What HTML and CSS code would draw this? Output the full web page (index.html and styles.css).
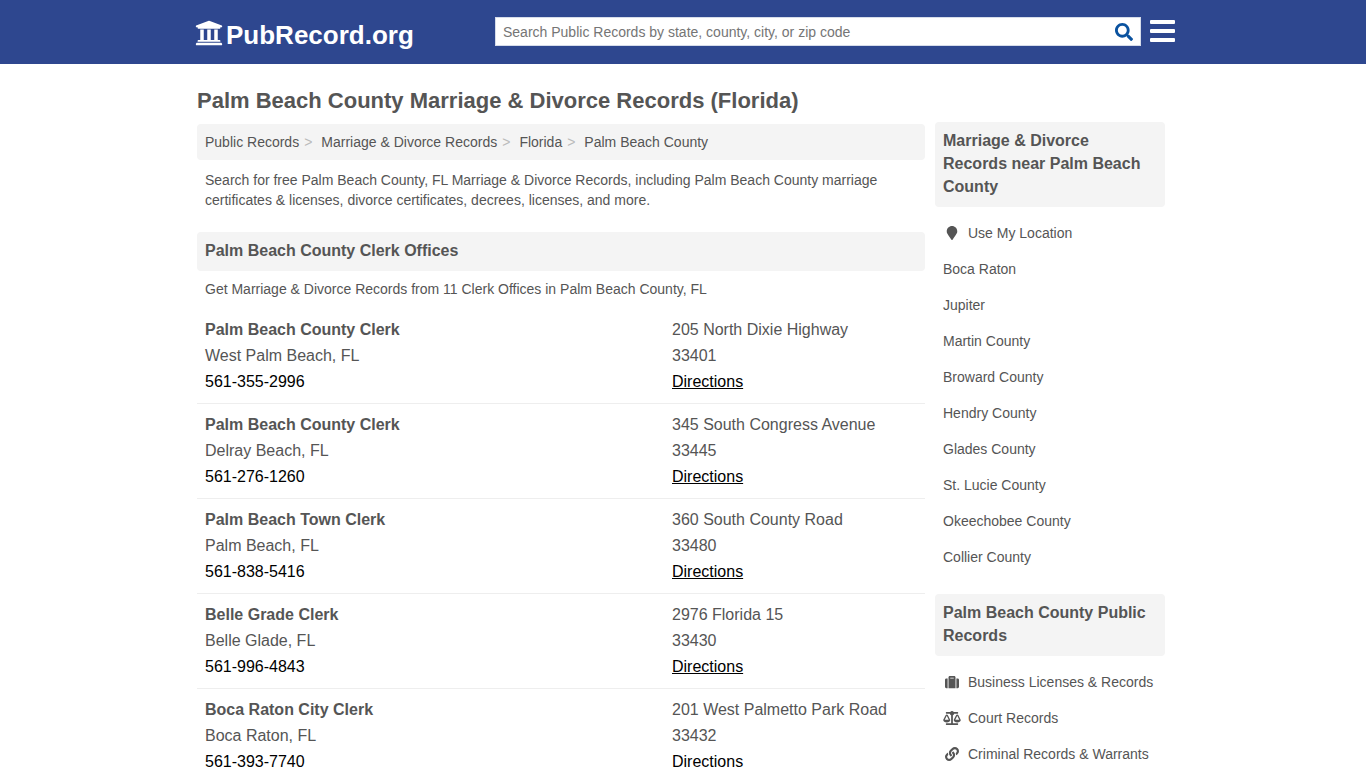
FILE: index.html
```html
<!DOCTYPE html>
<html lang="en">
<head>
<meta charset="utf-8">
<meta name="viewport" content="width=device-width, initial-scale=1">
<title>Palm Beach County Marriage &amp; Divorce Records (Florida)</title>
<link rel="stylesheet" href="styles.css">
</head>
<body>
<header class="site-header">
  <div class="header-inner">
    <a class="logo" href="#">
      <svg class="logo-icon" viewBox="0 0 512 512" aria-hidden="true"><path d="M496 128v16a8 8 0 0 1-8 8h-24v12c0 6.627-5.373 12-12 12H60c-6.627 0-12-5.373-12-12v-12H24a8 8 0 0 1-8-8v-16a8 8 0 0 1 4.941-7.392l232-88a7.996 7.996 0 0 1 6.118 0l232 88A8 8 0 0 1 496 128zm-24 304H40c-13.255 0-24 10.745-24 24v16a8 8 0 0 0 8 8h464a8 8 0 0 0 8-8v-16c0-13.255-10.745-24-24-24zM96 192v192H60c-6.627 0-12 5.373-12 12v20h416v-20c0-6.627-5.373-12-12-12h-36V192h-64v192h-64V192h-64v192h-64V192H96z"/></svg>
      <span>PubRecord.org</span>
    </a>
    <form class="search" role="search">
      <input class="search-input" type="text" aria-label="Search public records" placeholder="Search Public Records by state, county, city, or zip code">
      <button class="search-button" type="submit" aria-label="Search">
        <svg class="search-icon" viewBox="0 0 512 512" aria-hidden="true"><path d="M505 442.7L405.3 343c-4.5-4.5-10.6-7-17-7H372c27.6-35.3 44-79.7 44-128C416 93.1 322.9 0 208 0S0 93.1 0 208s93.1 208 208 208c48.3 0 92.7-16.4 128-44v16.3c0 6.4 2.5 12.5 7 17l99.7 99.7c9.4 9.4 24.6 9.4 33.9 0l28.3-28.3c9.4-9.4 9.4-24.6.1-34zM208 336c-70.7 0-128-57.2-128-128 0-70.7 57.2-128 128-128 70.7 0 128 57.2 128 128 0 70.7-57.2 128-128 128z"/></svg>
      </button>
    </form>
    <button class="menu-button" type="button" aria-label="Menu">
      <span class="menu-bar"></span><span class="menu-bar"></span><span class="menu-bar"></span>
    </button>
  </div>
</header>

<div class="page">
  <main class="content">
    <h1 class="page-title">Palm Beach County Marriage &amp; Divorce Records (Florida)</h1>
    <nav aria-label="Breadcrumb">
      <ol class="breadcrumb">
        <li><a href="#">Public Records</a></li>
        <li><a href="#">Marriage &amp; Divorce Records</a></li>
        <li><a href="#">Florida</a></li>
        <li><a href="#">Palm Beach County</a></li>
      </ol>
    </nav>
    <p class="intro">Search for free Palm Beach County, FL Marriage &amp; Divorce Records, including Palm Beach County marriage certificates &amp; licenses, divorce certificates, decrees, licenses, and more.</p>
    <h2 class="heading">Palm Beach County Clerk Offices</h2>
    <p class="summary">Get Marriage &amp; Divorce Records from 11 Clerk Offices in Palm Beach County, FL</p>

    <article class="office">
      <div><h3 class="office-name">Palm Beach County Clerk</h3><p>West Palm Beach, FL</p><a class="phone" href="tel:5613552996">561-355-2996</a></div>
      <div><p>205 North Dixie Highway</p><p>33401</p><a class="directions" href="#">Directions</a></div>
    </article>
    <article class="office">
      <div><h3 class="office-name">Palm Beach County Clerk</h3><p>Delray Beach, FL</p><a class="phone" href="tel:5612761260">561-276-1260</a></div>
      <div><p>345 South Congress Avenue</p><p>33445</p><a class="directions" href="#">Directions</a></div>
    </article>
    <article class="office">
      <div><h3 class="office-name">Palm Beach Town Clerk</h3><p>Palm Beach, FL</p><a class="phone" href="tel:5618385416">561-838-5416</a></div>
      <div><p>360 South County Road</p><p>33480</p><a class="directions" href="#">Directions</a></div>
    </article>
    <article class="office">
      <div><h3 class="office-name">Belle Grade Clerk</h3><p>Belle Glade, FL</p><a class="phone" href="tel:5619964843">561-996-4843</a></div>
      <div><p>2976 Florida 15</p><p>33430</p><a class="directions" href="#">Directions</a></div>
    </article>
    <article class="office">
      <div><h3 class="office-name">Boca Raton City Clerk</h3><p>Boca Raton, FL</p><a class="phone" href="tel:5613937740">561-393-7740</a></div>
      <div><p>201 West Palmetto Park Road</p><p>33432</p><a class="directions" href="#">Directions</a></div>
    </article>
  </main>

  <aside class="sidebar">
    <section>
      <h2 class="heading">Marriage &amp; Divorce Records near Palm Beach County</h2>
      <ul class="links">
        <li><a href="#"><svg class="link-icon" viewBox="-64 0 512 512" aria-hidden="true"><path d="M172.268 501.67C26.97 291.031 0 269.413 0 192 0 85.961 85.961 0 192 0s192 85.961 192 192c0 77.413-26.97 99.031-172.268 309.67-9.535 13.774-29.93 13.773-39.464 0z"/></svg>Use My Location</a></li>
        <li><a href="#">Boca Raton</a></li>
        <li><a href="#">Jupiter</a></li>
        <li><a href="#">Martin County</a></li>
        <li><a href="#">Broward County</a></li>
        <li><a href="#">Hendry County</a></li>
        <li><a href="#">Glades County</a></li>
        <li><a href="#">St. Lucie County</a></li>
        <li><a href="#">Okeechobee County</a></li>
        <li><a href="#">Collier County</a></li>
      </ul>
    </section>
    <section>
      <h2 class="heading">Palm Beach County Public Records</h2>
      <ul class="links">
        <li><a href="#"><svg class="link-icon" viewBox="0 0 512 512" aria-hidden="true"><path d="M128 480h256V80c0-26.5-21.5-48-48-48H176c-26.5 0-48 21.5-48 48v400zm64-384h128v32H192V96zm320 80v256c0 26.5-21.5 48-48 48h-48V128h48c26.5 0 48 21.5 48 48zM96 480H48c-26.5 0-48-21.5-48-48V176c0-26.5 21.5-48 48-48h48v352z"/></svg>Business Licenses &amp; Records</a></li>
        <li><a href="#"><svg class="link-icon" viewBox="0 0 640 512" aria-hidden="true"><path d="M256 336h-.02c0-16.18 1.34-8.73-85.05-181.51-17.65-35.29-68.19-35.36-85.87 0C-2.06 328.75.02 320.33.02 336H0c0 44.18 57.31 80 128 80s128-35.82 128-80zM128 176l72 144H56l72-144zm511.98 160c0-16.18 1.34-8.73-85.05-181.51-17.65-35.29-68.19-35.36-85.87 0-87.12 174.26-85.04 165.84-85.04 181.51H384c0 44.18 57.31 80 128 80s128-35.82 128-80h-.02zM440 320l72-144 72 144H440zm88 128H352V153.25c23.51-10.29 41.16-31.48 46.39-57.25H528c8.84 0 16-7.16 16-16V48c0-8.84-7.16-16-16-16H383.64C369.04 12.68 346.09 0 320 0s-49.04 12.68-63.64 32H112c-8.84 0-16 7.16-16 16v32c0 8.84 7.16 16 16 16h129.61c5.23 25.76 22.87 46.96 46.39 57.25V448H112c-8.84 0-16 7.16-16 16v32c0 8.84 7.16 16 16 16h416c8.84 0 16-7.16 16-16v-32c0-8.84-7.16-16-16-16z"/></svg>Court Records</a></li>
        <li><a href="#"><svg class="link-icon" viewBox="0 0 512 512" aria-hidden="true"><path d="M326.612 185.391c59.747 59.809 58.927 155.698.36 214.59-.11.12-.24.25-.36.37l-67.2 67.2c-59.27 59.27-155.699 59.262-214.96 0-59.27-59.26-59.27-155.7 0-214.96l37.106-37.106c9.84-9.84 26.786-3.3 27.294 10.606.648 17.722 3.826 35.527 9.69 52.721 1.986 5.822.567 12.262-3.783 16.612l-13.087 13.087c-28.026 28.026-28.905 73.66-1.155 101.96 28.024 28.579 74.086 28.749 102.325.51l67.2-67.19c28.191-28.191 28.073-73.757 0-101.83-3.701-3.694-7.429-6.564-10.341-8.569a16.037 16.037 0 0 1-6.947-12.606c-.396-10.567 3.348-21.456 11.698-29.806l21.054-21.055c5.521-5.521 14.182-6.199 20.584-1.731a152.482 152.482 0 0 1 20.522 17.197zM467.547 44.449c-59.261-59.262-155.69-59.27-214.96 0l-67.2 67.2c-.12.12-.25.25-.36.37-58.566 58.892-59.387 154.781.36 214.59a152.454 152.454 0 0 0 20.521 17.196c6.402 4.468 15.064 3.789 20.584-1.731l21.054-21.055c8.35-8.35 12.094-19.239 11.698-29.806a16.037 16.037 0 0 0-6.947-12.606c-2.912-2.005-6.64-4.875-10.341-8.569-28.073-28.073-28.191-73.639 0-101.83l67.2-67.19c28.239-28.239 74.3-28.069 102.325.51 27.75 28.3 26.872 73.934-1.155 101.96l-13.087 13.087c-4.35 4.35-5.769 10.79-3.783 16.612 5.864 17.194 9.042 34.999 9.69 52.721.509 13.906 17.454 20.446 27.294 10.606l37.106-37.106c59.271-59.259 59.271-155.699.001-214.959z"/></svg>Criminal Records &amp; Warrants</a></li>
      </ul>
    </section>
  </aside>
</div>
</body>
</html>
```
FILE: styles.css
```css
* { box-sizing: border-box; }

body {
  margin: 0;
  background: #fff;
  color: #555;
  font: 14px/20px "Liberation Sans", Arial, sans-serif;
}

h1, h2, h3, p, ol, ul { margin: 0; padding: 0; }
ol, ul { list-style: none; }
a { color: inherit; text-decoration: none; }
button { border: 0; padding: 0; background: none; cursor: pointer; }
svg { display: block; fill: currentColor; }

.site-header { background: #2e478f; color: #fff; }

.header-inner {
  display: flex;
  align-items: flex-start;
  max-width: 984px;
  margin: 0 auto;
  padding: 17px 0 12px 4px;
}

.logo {
  display: flex;
  align-items: flex-start;
  flex: 0 0 300px;
  gap: 3px;
  font-size: 26px;
  font-weight: bold;
  line-height: 33px;
  padding-top: 2px;
}
.logo-icon { width: 28px; height: 28px; }

.search {
  display: flex;
  flex: 1;
  height: 29px;
  background: #fff;
  border: 1px solid #d6dcea;
}
.search-input {
  flex: 1;
  min-width: 0;
  border: 0;
  padding: 0 7px;
  background: none;
  color: #555;
  font: inherit;
}
.search-input::placeholder { color: #757575; }
.search-button {
  display: flex;
  align-items: center;
  justify-content: center;
  width: 32px;
  color: #0a529f;
}
.search-icon { width: 18px; height: 18px; }

.menu-button {
  display: flex;
  flex-direction: column;
  gap: 5px;
  width: 25px;
  margin-left: 9px;
  padding-top: 3px;
}
.menu-bar { width: 100%; height: 4px; border-radius: 1px; background: #fff; }

.page {
  display: flex;
  align-items: flex-start;
  gap: 10px;
  max-width: 972px;
  margin: 0 auto;
  padding-right: 4px;
}
.content { flex: 1; min-width: 0; padding-top: 23px; }
.sidebar { flex: 0 0 230px; padding-top: 58px; }

.page-title { margin-bottom: 9px; font-size: 22px; line-height: 28px; }

.breadcrumb {
  display: flex;
  flex-wrap: wrap;
  padding: 8px;
  border-radius: 4px;
  background: #f4f4f4;
}
.breadcrumb li + li::before { content: ">"; padding: 0 9px 0 5px; color: #bbb; }

.intro { padding: 10px 8px 22px; }
.summary { padding: 8px 8px 10px; }

.heading {
  padding: 7px 8px 9px;
  border-radius: 4px;
  background: #f4f4f4;
  font-size: 16px;
  line-height: 23px;
}

.office {
  display: grid;
  grid-template-columns: 467px 1fr;
  padding: 8px;
  border-bottom: 1px solid #eee;
  font-size: 16px;
  line-height: 26px;
}
.office-name { font-size: 16px; }
.phone, .directions { color: #000; }
.directions { text-decoration: underline; }

.links { padding: 8px 8px 19px; }
.links a { display: flex; align-items: center; padding: 8px 0; }
.link-icon { width: 18px; height: 14px; margin-right: 7px; }
```
